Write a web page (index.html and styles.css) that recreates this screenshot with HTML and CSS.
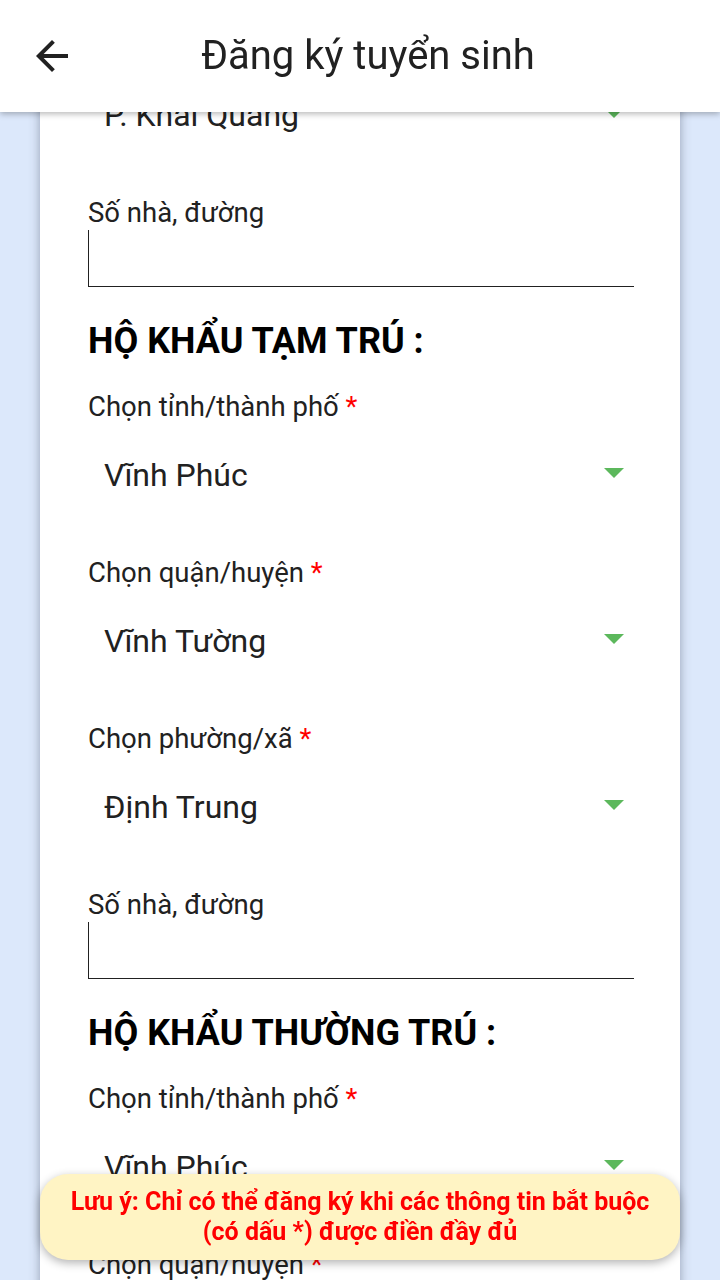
FILE: index.html
```html
<!DOCTYPE html>
<html lang="vi">
<head>
<meta charset="utf-8">
<title>Đăng ký tuyển sinh</title>
<link rel="stylesheet" href="styles.css">
</head>
<body>
<header class="appbar">
  <div class="appbar-icon">
    <svg width="48" height="48" viewBox="0 0 24 24"><path d="M20 11H7.83l5.59-5.59L12 4l-8 8 8 8 1.41-1.41L7.83 13H20v-2z" fill="#212121"/></svg>
  </div>
  <h1 class="appbar-title">Đăng ký tuyển sinh</h1>
</header>

<main class="card">
  <div class="select first"><span>P. Khai Quang</span><i class="caret"></i></div>

  <label class="label gap">Số nhà, đường</label>
  <div class="input"></div>

  <h2 class="section">HỘ KHẨU TẠM TRÚ :</h2>

  <label class="label">Chọn tỉnh/thành phố <b class="req">*</b></label>
  <div class="select"><span>Vĩnh Phúc</span><i class="caret"></i></div>

  <label class="label gap">Chọn quận/huyện <b class="req">*</b></label>
  <div class="select"><span>Vĩnh Tường</span><i class="caret"></i></div>

  <label class="label gap">Chọn phường/xã <b class="req">*</b></label>
  <div class="select"><span>Định Trung</span><i class="caret"></i></div>

  <label class="label gap">Số nhà, đường</label>
  <div class="input"></div>

  <h2 class="section">HỘ KHẨU THƯỜNG TRÚ :</h2>

  <label class="label">Chọn tỉnh/thành phố <b class="req">*</b></label>
  <div class="select"><span>Vĩnh Phúc</span><i class="caret"></i></div>

  <label class="label gap">Chọn quận/huyện <b class="req">*</b></label>
  <div class="select"><span>Vĩnh Tường</span><i class="caret"></i></div>
</main>

<div class="note">Lưu ý: Chỉ có thể đăng ký khi các thông tin bắt buộc<br>(có dấu *) được điền đầy đủ</div>
</body>
</html>
```

FILE: styles.css
```css
* { box-sizing: border-box; }
html, body { margin: 0; padding: 0; }
body {
  width: 720px;
  height: 1280px;
  overflow: hidden;
  background: #dce8fb;
  font-family: Roboto, "Noto Sans", sans-serif;
  color: #212121;
}
.appbar {
  position: fixed;
  top: 0; left: 0; right: 0;
  height: 112px;
  background: #fff;
  display: flex;
  align-items: center;
  box-shadow: 0 2px 6px rgba(0,0,0,0.28);
  z-index: 10;
}
.appbar-icon {
  width: 96px;
  padding-left: 28px;
  display: flex;
  align-items: center;
}
.appbar-icon svg { display: block; }
.appbar-title {
  flex: 1;
  margin: 0;
  padding-right: 80px;
  text-align: center;
  font-weight: 400;
  font-size: 40px;
  line-height: 48px;
  color: #212121;
}
.card {
  margin: 0 40px;
  min-height: 1400px;
  background: #fff;
  padding: 83px 46px 0 48px;
  box-shadow: 0 0 10px rgba(60,70,90,0.45);
  display: flex;
  flex-direction: column;
}
.label {
  display: block;
  font-size: 27.5px;
  line-height: 32px;
  height: 32px;
  color: #212121;
  white-space: nowrap;
}
.label.gap { margin-top: 50px; }
.req { color: #f00; font-weight: 400; }
.select {
  margin-top: 20px;
  height: 64px;
  display: flex;
  align-items: center;
  justify-content: space-between;
  padding: 0 10px 0 16px;
  font-size: 32px;
}
.select.first { margin-top: 0; }
.caret {
  width: 0; height: 0;
  border-left: 10px solid transparent;
  border-right: 10px solid transparent;
  border-top: 10px solid #5cb85c;
  margin-top: -4px;
}
.input {
  margin-top: 1px;
  height: 57px;
  border-left: 1.5px solid #212121;
  border-bottom: 1.5px solid #212121;
}
.section {
  margin: 34px 0 30px;
  font-size: 36px;
  line-height: 40px;
  font-weight: 700;
  color: #000;
  white-space: nowrap;
}
.note {
  position: fixed;
  left: 40px; right: 40px;
  bottom: 20px;
  height: 86px;
  background: #fff4c4;
  border-radius: 28px;
  box-shadow: 0 3px 10px rgba(0,0,0,0.3);
  display: flex;
  align-items: center;
  justify-content: center;
  text-align: center;
  color: #f00;
  font-weight: 700;
  font-size: 25px;
  line-height: 30px;
  z-index: 20;
}
```
